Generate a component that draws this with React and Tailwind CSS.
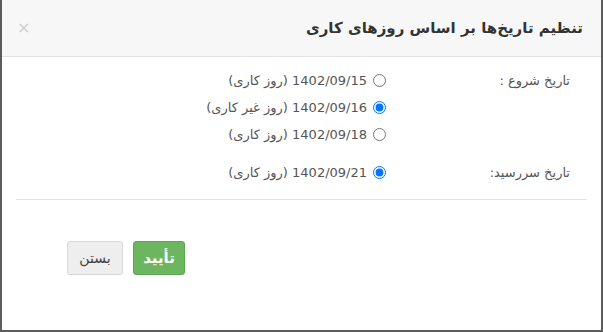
import React from 'react';

const options = [
  { date: '1402/09/15', note: '(روز کاری)', checked: false },
  { date: '1402/09/16', note: '(روز غیر کاری)', checked: true },
  { date: '1402/09/18', note: '(روز کاری)', checked: false },
];

function RadioRow({ name, date, note, checked }) {
  return (
    <label className="flex items-center h-[27px] gap-[6px] text-[13px] text-[#555]">
      <input type="radio" name={name} defaultChecked={checked} className="m-0 w-[13px] h-[13px]" />
      <span>{date} {note}</span>
    </label>
  );
}

export default function App() {
  return (
    <div className="w-[603px] h-[332px] bg-[#5c5c5c] pl-[2px] overflow-hidden" style={{ fontFamily: '"DejaVu Sans", "Open Sans", sans-serif' }}>
      <div dir="rtl" className="w-[599px] h-[330px] bg-white flex flex-col">
        {/* Header */}
        <div className="h-[57px] shrink-0 bg-[#f7f7f7] border-b border-[#e3e3e3] flex items-center justify-between pr-[18px] pl-[15px]">
          <h3 className="text-[15px] font-bold text-[#333]">تنظیم تاریخ‌ها بر اساس روزهای کاری</h3>
          <span className="text-[#cfcfcf] text-[16px] leading-none">×</span>
        </div>

        {/* Body */}
        <div className="pt-[10px] pr-[31px] pl-[15px]">
          <div className="flex">
            <div className="w-[184px] h-[27px] flex items-center text-[13px] text-[#555]">تاریخ شروع :</div>
            <div className="flex flex-col">
              {options.map((o) => (
                <RadioRow key={o.date} name="start" {...o} />
              ))}
            </div>
          </div>
          <div className="flex mt-[11px]">
            <div className="w-[184px] h-[27px] flex items-center text-[13px] text-[#555]">تاریخ سررسید:</div>
            <RadioRow name="due" date="1402/09/21" note="(روز کاری)" checked />
          </div>
        </div>
        <div className="mx-[14px] mt-[13px] border-t border-[#e5e5e5]" />

        {/* Footer */}
        <div className="flex gap-[10px] pr-[416px] pt-[41px]">
          <button className="h-[34px] w-[52px] rounded-[3px] bg-[#6cb65f] border border-[#5fa653] text-white text-[15px] font-bold">تأیید</button>
          <button className="h-[34px] w-[56px] rounded-[3px] bg-[#eeeeee] border border-[#d8d8d8] text-[#444] text-[14px]">بستن</button>
        </div>
      </div>
    </div>
  );
}
